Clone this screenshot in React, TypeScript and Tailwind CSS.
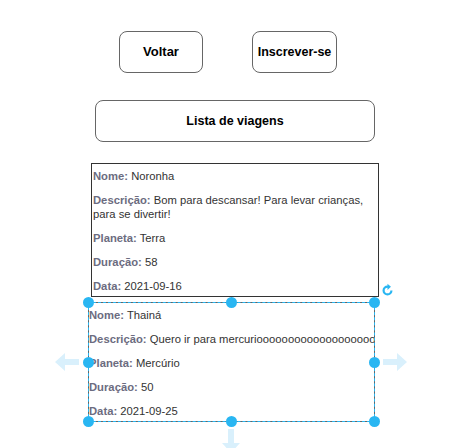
import React from "react";

const HANDLE = "#29b6f2";

interface Trip {
  nome: string;
  descricao: string;
  planeta: string;
  duracao: number;
  data: string;
}

const trips: Trip[] = [
  {
    nome: "Noronha",
    descricao: "Bom para descansar! Para levar crianças, para se divertir!",
    planeta: "Terra",
    duracao: 58,
    data: "2021-09-16",
  },
  {
    nome: "Thainá",
    descricao: "Quero ir para mercurioooooooooooooooooooooooooooooooo",
    planeta: "Mercúrio",
    duracao: 50,
    data: "2021-09-25",
  },
];

const Field = ({ label, value }: { label: string; value: React.ReactNode }) => (
  <p className="leading-[14px]">
    <span className="font-bold text-[#6c6c80]">{label}:</span> {value}
  </p>
);

const TripCard = ({ trip, className }: { trip: Trip; className: string }) => (
  <div className={`flex flex-col gap-[10px] overflow-hidden py-[5px] text-[11.25px] text-[#333] ${className}`}>
    <Field label="Nome" value={trip.nome} />
    <Field label="Descrição" value={trip.descricao} />
    <Field label="Planeta" value={trip.planeta} />
    <Field label="Duração" value={trip.duracao} />
    <Field label="Data" value={trip.data} />
  </div>
);

const Dot = ({ className }: { className: string }) => (
  <span className={`absolute h-[11px] w-[11px] rounded-full bg-[#29b6f2] ${className}`} />
);

const Arrow = ({ rotate, className }: { rotate: number; className: string }) => (
  <svg
    className={`absolute ${className}`}
    width="24"
    height="18"
    viewBox="0 0 24 18"
    style={{ transform: `rotate(${rotate}deg)` }}
  >
    <path d="M0 6h14V0l10 9-10 9v-6H0z" fill="#d9f0fc" />
  </svg>
);

export default function App() {
  const [first, second] = trips;
  return (
    <div
      className="relative flex h-[448px] w-[473px] flex-col items-start overflow-hidden bg-white pt-[31px]"
      style={{ fontFamily: '"Liberation Sans", Arial, sans-serif' }}
    >
      <div className="ml-[119px] flex gap-[49px]">
        <button className="h-[42px] w-[84px] rounded-lg border border-[#666] text-[13px] font-bold text-black">
          Voltar
        </button>
        <button className="h-[42px] w-[85px] rounded-lg border border-[#666] text-[12.5px] font-bold text-black">
          Inscrever-se
        </button>
      </div>

      <button className="mt-[27px] ml-[95px] h-[42px] w-[280px] rounded-lg border border-[#666] text-[12.5px] font-bold text-black">
        Lista de viagens
      </button>

      <TripCard trip={first} className="mt-[21px] ml-[91px] h-[134px] w-[288px] border border-[#333] px-[1px]" />

      <div className="relative mt-[5px] ml-[88px] h-[120px] w-[287px]">
        <TripCard trip={second} className="h-full w-full border border-[#666] whitespace-nowrap" />
        {/* selection overlay */}
        <div className="absolute inset-0 border border-dashed border-[#29b6f2]" />
        <Dot className="-top-[5px] -left-[5px]" />
        <Dot className="-top-[5px] left-[138px]" />
        <Dot className="-top-[5px] -right-[5px]" />
        <Dot className="top-[55px] -left-[5px]" />
        <Dot className="top-[55px] -right-[5px]" />
        <Dot className="-bottom-[5px] -left-[5px]" />
        <Dot className="-bottom-[5px] left-[138px]" />
        <Dot className="-bottom-[5px] -right-[5px]" />
        <svg className="absolute -top-[19px] -right-[20px]" width="15" height="15" viewBox="0 0 24 24">
          <path d="M12 4a8 8 0 1 0 8 8h-3.5a4.5 4.5 0 1 1-4.5-4.5v3.5l5.5-5L12 1z" fill={HANDLE} />
        </svg>
      </div>

      <Arrow rotate={180} className="top-[353px] left-[55px]" />
      <Arrow rotate={0} className="top-[353px] left-[383px]" />
      <Arrow rotate={90} className="top-[432px] left-[219px]" />
    </div>
  );
}
